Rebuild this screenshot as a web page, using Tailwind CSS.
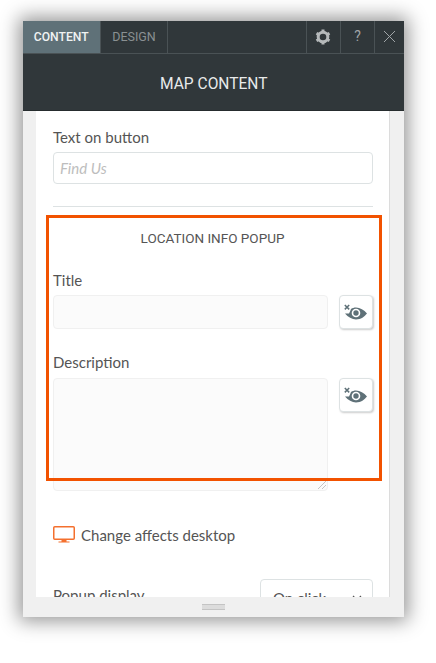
<!DOCTYPE html>
<html lang="en">
<head>
    <meta charset="UTF-8">
    <title>Map Content</title>
    <script src="https://cdn.jsdelivr.net/npm/@tailwindcss/browser@4"></script>
</head>
<body class="bg-white w-[436px] h-[663px] overflow-hidden font-['Lato',sans-serif]">
    <div class="relative ml-[23px] mt-[21px] w-[381px] h-[596px] flex flex-col bg-[#f0f0f0] shadow-[0_0_18px_4px_rgba(0,0,0,0.42)]">
        <!-- Tabs -->
        <div class="flex h-[33px] bg-[#30373a] border-b border-[#4a5255] font-['Roboto',sans-serif] text-[12.5px]">
            <div class="w-[78px] flex items-center justify-center pr-[1px] bg-[#5f7178] border-r border-[#4a5255] text-[#f0f3f3]"><span class="font-medium scale-x-[0.97]">CONTENT</span></div>
            <div class="w-[67px] flex items-center justify-center border-r border-[#4a5255] text-[#8a9092]">DESIGN</div>
            <div class="ml-auto w-[34px] flex items-center justify-center pr-[2px] border-l border-[#4a5255]">
                <svg width="16" height="16" viewBox="0 0 16 16">
                    <circle cx="8" cy="8" r="4.800" fill="none" stroke="#b5b9ba" stroke-width="3"/>
                    <path d="M8 0.500v2.500M8 13v2.500M1.500 4.250l2.200 1.250M12.300 10.500l2.200 1.250M1.500 11.750l2.200-1.250M12.300 5.500l2.200-1.250" stroke="#b5b9ba" stroke-width="3"/>
                </svg>
            </div>
            <div class="w-[34px] flex items-center justify-center border-l border-[#4a5255] text-[#a0a5a7] text-[14px]">?</div>
            <div class="w-[30px] flex items-center justify-center border-l border-[#4a5255]">
                <svg width="13" height="13" viewBox="0 0 13 13"><path d="M1 1l11 11M12 1L1 12" stroke="#a0a5a7" stroke-width="1"/></svg>
            </div>
        </div>
        <div class="h-[57px] flex items-center justify-center pt-[3px] bg-[#30373a] border-b border-[#262c2e] font-['Roboto',sans-serif] text-[#e8eaea]"><span class="text-[17px] scale-x-[0.915]">MAP CONTENT</span></div>

        <!-- Scrolling content -->
        <div class="mx-[13px] w-[354px] h-[487px] bg-white border-r border-[#dcdcdc] overflow-hidden px-[17px] text-[#555]">
            <div class="pt-[16px] text-[15px] leading-[20px]">Text on button</div>
            <div class="mt-[5px] w-[320px] h-[32px] flex items-center px-[6px] rounded-[4px] border border-[#dde2e3] italic text-[15px] text-[#bdbdbd]">Find Us</div>
            <div class="mt-[22px] w-[320px] border-t border-[#dde2e3]"></div>

            <div class="mt-[23px] text-center font-['Roboto',sans-serif] text-[13.5px] leading-[16px] text-[#555]">LOCATION INFO POPUP</div>

            <div class="mt-[24px] text-[15px] leading-[20px]">Title</div>
            <div class="mt-[5px] flex gap-[11px] w-[320px]">
                <div class="w-[275px] h-[34px] rounded-[4px] border border-[#f0f0f0] bg-[#fbfbfb]"></div>
                <div class="w-[34px] h-[34px] flex items-center justify-center rounded-[4px] border border-[#dde2e3] bg-white shadow-[1px_1px_2px_rgba(0,0,0,0.2)]">
                    <svg width="24" height="16" viewBox="0 0 24 16">
                        <path d="M0.800 1l4.400 4.400M5.200 1L0.800 5.400" stroke="#5f7178" stroke-width="1.500"/>
                        <path d="M1 9.500C4 13 8 15.500 12 15.500c5 0 8.500-3 11-6-3-3.500-7-6-11-6-2 0-3.500 0.500-5 1.500l-1 2.500-1 2z" fill="#5f7178"/>
                        <circle cx="12" cy="9" r="4.300" fill="#fff"/>
                        <circle cx="12" cy="9" r="2.700" fill="#5f7178"/>
                    </svg>
                </div>
            </div>

            <div class="mt-[23px] text-[15px] leading-[20px]">Description</div>
            <div class="mt-[6px] flex gap-[11px] w-[320px]">
                <div class="relative w-[275px] h-[113px] rounded-[4px] border border-[#f0f0f0] bg-[#fbfbfb]">
                    <svg class="absolute right-0 bottom-0" width="10" height="10" viewBox="0 0 10 10"><path d="M1 9l8-8M5 9l4-4" stroke="#c4c4c4" stroke-width="1"/></svg>
                </div>
                <div class="w-[34px] h-[34px] flex items-center justify-center rounded-[4px] border border-[#dde2e3] bg-white shadow-[1px_1px_2px_rgba(0,0,0,0.2)]">
                    <svg width="24" height="16" viewBox="0 0 24 16">
                        <path d="M0.800 1l4.400 4.400M5.200 1L0.800 5.400" stroke="#5f7178" stroke-width="1.500"/>
                        <path d="M1 9.500C4 13 8 15.500 12 15.500c5 0 8.500-3 11-6-3-3.500-7-6-11-6-2 0-3.500 0.500-5 1.500l-1 2.500-1 2z" fill="#5f7178"/>
                        <circle cx="12" cy="9" r="4.300" fill="#fff"/>
                        <circle cx="12" cy="9" r="2.700" fill="#5f7178"/>
                    </svg>
                </div>
            </div>

            <div class="mt-[34px] flex items-center gap-[6px] text-[15px] leading-[20px]">
                <svg width="22" height="17" viewBox="0 0 22 17">
                    <rect x="0.750" y="0.750" width="20.500" height="12.500" rx="1" fill="none" stroke="#f4702e" stroke-width="1.500"/>
                    <path d="M8.500 14h5v1.500h-5zM5.500 15.500h11v1h-11z" fill="#f4702e"/>
                </svg>
                <span>Change affects desktop</span>
            </div>

            <div class="mt-[34px] flex w-[320px] justify-between items-start">
                <div class="pt-[6px] text-[15px] leading-[20px]">Popup display</div>
                <div class="w-[113px] h-[34px] flex items-center justify-between pl-[12px] pr-[10px] pt-[4px] rounded-[4px] border border-[#dde2e3] text-[15px]">
                    <span>On click</span>
                    <svg width="10" height="6" viewBox="0 0 10 6"><path d="M1 1l4 4 4-4" fill="none" stroke="#555" stroke-width="1.200"/></svg>
                </div>
            </div>
        </div>

        <!-- Resize handle -->
        <div class="h-[20px] flex items-center justify-center">
            <div class="w-[23px] h-[6px] border-y border-[#c4c4c4] bg-[#dcdcdc]"></div>
        </div>

        <!-- Highlight over the popup section -->
        <div class="absolute left-[23px] top-[194px] w-[336px] h-[266px] border-[3px] border-[#f25200]"></div>
    </div>
</body>
</html>
